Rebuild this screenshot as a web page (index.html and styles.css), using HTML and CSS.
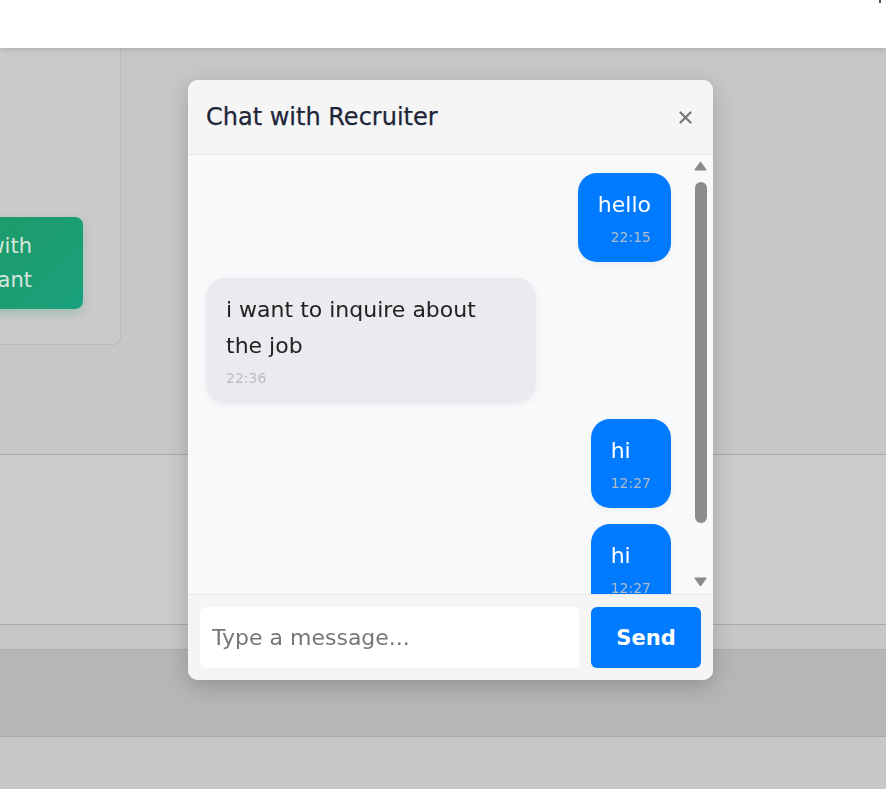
FILE: index.html
```html
<!DOCTYPE html>
<html lang="en">
<head>
<meta charset="utf-8">
<title>Chat with Recruiter</title>
<link rel="stylesheet" href="styles.css">
</head>
<body>
  <header class="topbar"><span class="topbar-mark"></span></header>
  <section class="hero">
    <div class="card">
      <button class="applicant-btn">Chat with<br>Applicant</button>
    </div>
  </section>
  <section class="band band-a"></section>
  <section class="band band-b"></section>
  <section class="band band-c"></section>

  <div class="modal">
    <div class="modal-header">
      <h2 class="modal-title">Chat with Recruiter</h2>
      <button class="close-btn" aria-label="Close">
        <svg width="13" height="13" viewBox="0 0 13 13"><path d="M1.5 1.5 L11.5 11.5 M11.5 1.5 L1.5 11.5" stroke="#777" stroke-width="2.2" stroke-linecap="round"/></svg>
      </button>
    </div>
    <div class="modal-body">
      <div class="messages">
        <div class="msg sent"><div class="msg-text">hello</div><span class="msg-time">22:15</span></div>
        <div class="msg recv"><div class="msg-text">i want to inquire about the job</div><span class="msg-time">22:36</span></div>
        <div class="msg sent"><div class="msg-text">hi</div><span class="msg-time">12:27</span></div>
        <div class="msg sent"><div class="msg-text">hi</div><span class="msg-time">12:27</span></div>
      </div>
      <div class="scrollbar">
        <svg class="arrow" width="13" height="10" viewBox="0 0 13 10"><path d="M6.5 0.8 Q7 0.8 7.4 1.4 L12.4 8.6 Q12.8 9.4 12 9.4 L1 9.4 Q0.2 9.4 0.6 8.6 L5.6 1.4 Q6 0.8 6.5 0.8 Z" fill="#8a8a8a"/></svg>
        <div class="thumb"></div>
        <svg class="arrow arrow-down" width="13" height="10" viewBox="0 0 13 10"><path d="M6.5 9.2 Q7 9.2 7.4 8.6 L12.4 1.4 Q12.8 0.6 12 0.6 L1 0.6 Q0.2 0.6 0.6 1.4 L5.6 8.6 Q6 9.2 6.5 9.2 Z" fill="#8a8a8a"/></svg>
      </div>
    </div>
    <div class="modal-footer">
      <input class="msg-input" type="text" placeholder="Type a message...">
      <button class="send-btn">Send</button>
    </div>
  </div>
</body>
</html>
```

FILE: styles.css
```css
* { box-sizing: border-box; }

html, body {
  margin: 0;
  height: 789px;
  overflow: hidden;
}

body {
  background: #c6c7c9;
  font-family: "DejaVu Sans", "Noto Sans", sans-serif;
  display: flex;
  flex-direction: column;
}

.topbar {
  height: 48px;
  flex-shrink: 0;
  background: #ffffff;
  box-shadow: 0 2px 5px rgba(0, 0, 0, 0.12);
  display: flex;
  justify-content: flex-end;
  align-items: flex-start;
  padding-right: 5px;
  position: relative;
  z-index: 1;
}

.topbar-mark {
  width: 2px;
  height: 3px;
  background: #555;
}

.hero {
  height: 407px;
  flex-shrink: 0;
  border-bottom: 1px solid #a9aaac;
}

.card {
  width: 121px;
  height: 297px;
  background: #cacaca;
  border-right: 1px solid #b9babc;
  border-bottom: 1px solid #b9babc;
  border-bottom-right-radius: 8px;
  padding-top: 169px;
}

.applicant-btn {
  display: block;
  margin-left: -120px;
  width: 203px;
  height: 92px;
  border: none;
  border-radius: 8px;
  background: linear-gradient(135deg, #1f985f, #1aa17c);
  box-shadow: 0 4px 10px rgba(26, 150, 100, 0.25);
  color: #d8e5dd;
  font-family: "DejaVu Sans", sans-serif;
  font-size: 21px;
  line-height: 34px;
  text-align: right;
  padding: 0 51px 0 0;
}

.band { flex-shrink: 0; border-bottom: 1px solid #a9aaac; }
.band-a { height: 170px; background: #cbcbcb; }
.band-b { height: 25px; background: #c6c7c9; }
.band-c { height: 87px; background: #b5b6b8; }

/* Modal */
.modal {
  position: fixed;
  left: 188px;
  top: 80px;
  width: 525px;
  height: 600px;
  background: #f8f9fb;
  border-radius: 10px;
  box-shadow: 0 6px 22px rgba(0, 0, 0, 0.2);
  display: flex;
  flex-direction: column;
  overflow: hidden;
  z-index: 2;
}

.modal-header {
  height: 75px;
  flex-shrink: 0;
  background: #f5f5f5;
  border-bottom: 1px solid #e6e6e6;
  display: flex;
  align-items: center;
  justify-content: space-between;
  padding: 0 21px 0 18px;
}

.modal-title {
  margin: 0;
  font-size: 24px;
  font-weight: normal;
  color: #1d2538;
  -webkit-text-stroke: 0.25px #1d2538;
}

.close-btn {
  border: none;
  background: none;
  padding: 0;
  display: flex;
  margin-top: 1px;
}

.modal-body {
  flex: 1;
  display: flex;
  min-height: 0;
  background: #f8f9fb;
}

.messages {
  flex: 1;
  overflow: hidden;
  padding: 18px 21px 0 18px;
  display: flex;
  flex-direction: column;
  gap: 16px;
}

.msg {
  flex-shrink: 0;
  max-width: 71%;
  padding: 14px 20px;
  border-radius: 19px;
  font-size: 22px;
  line-height: 36px;
  box-shadow: 0 2px 6px rgba(0, 0, 0, 0.05);
}

.msg.sent {
  align-self: flex-end;
  background: #007bff;
  color: #ffffff;
}

.msg.recv {
  align-self: flex-start;
  background: #e9ebee;
  color: #222222;
}

.msg-time {
  display: block;
  margin-top: 4px;
  font-size: 14px;
  line-height: 21px;
}

.msg.sent .msg-time { text-align: right; color: #b1bbc7; }
.msg.recv .msg-time { color: #bdbdbd; }

.scrollbar {
  width: 17px;
  margin-right: 4px;
  display: flex;
  flex-direction: column;
  align-items: center;
  padding: 6px 0 7px;
}

.thumb {
  width: 12px;
  height: 341px;
  margin-top: 11px;
  border-radius: 6px;
  background: #8c8c8c;
}

.arrow-down { margin-top: auto; }

.modal-footer {
  flex-shrink: 0;
  background: #f5f5f5;
  border-top: 1px solid #e6e6e6;
  padding: 12px;
  display: flex;
  gap: 12px;
}

.msg-input {
  flex: 1;
  min-width: 0;
  height: 61px;
  border: none;
  border-radius: 6px;
  background: #ffffff;
  padding: 0 12px;
  font-family: "DejaVu Sans", sans-serif;
  font-size: 22px;
  color: #222;
  outline: none;
}

.msg-input::placeholder { color: #777777; }

.send-btn {
  width: 110px;
  height: 61px;
  border: none;
  border-radius: 6px;
  background: #007bff;
  color: #ffffff;
  font-family: "DejaVu Sans", sans-serif;
  font-size: 21px;
  font-weight: bold;
}
```
